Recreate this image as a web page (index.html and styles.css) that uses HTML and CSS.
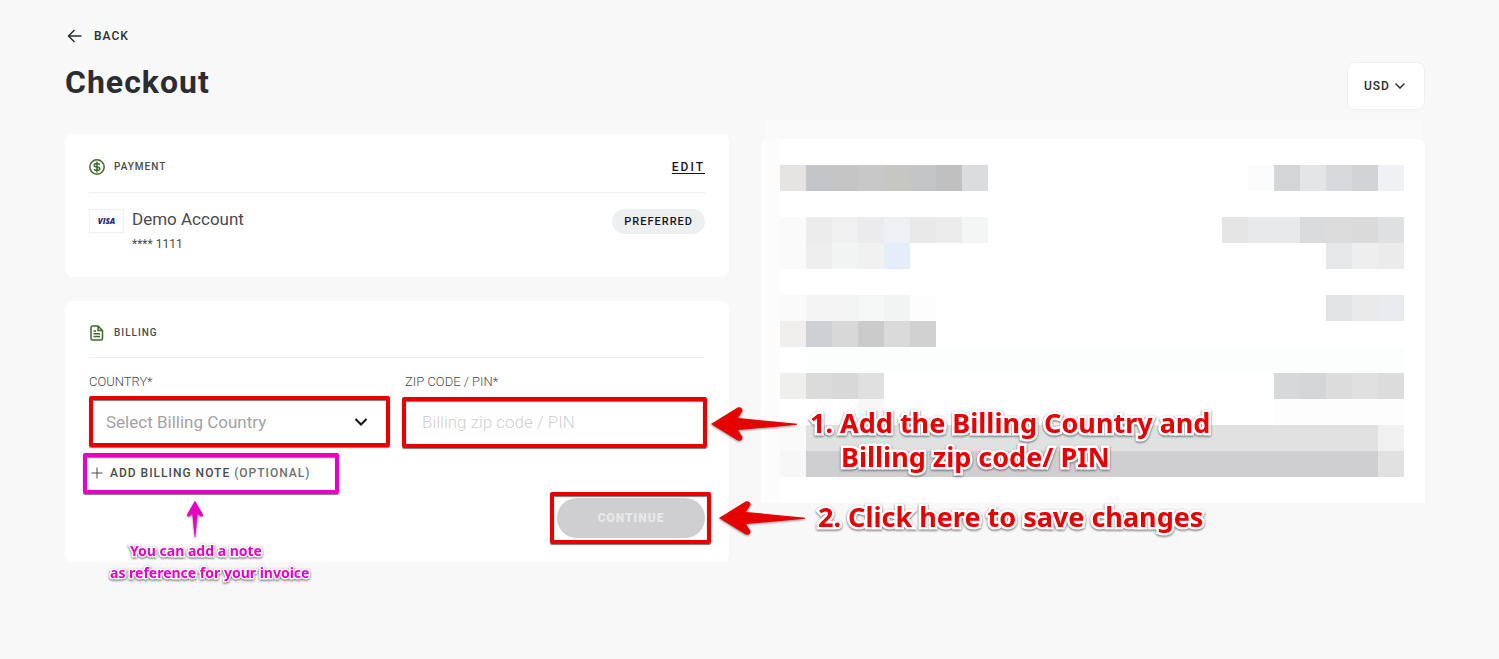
FILE: index.html
```html
<!DOCTYPE html>
<html lang="en">
<head>
    <meta charset="UTF-8">
    <meta name="viewport" content="width=device-width, initial-scale=1.0">
    <title>Checkout</title>
    <link rel="stylesheet" href="styles.css">
</head>
<body>
    <div class="page">
        <header>
            <a class="back" href="#">
                <svg width="20" height="20" viewBox="0 0 20 20"><path d="M16.5 10H3.5M9.5 4L3.5 10L9.5 16"/></svg>
                BACK
            </a>
            <div class="title-row">
                <h1>Checkout</h1>
                <div class="currency">
                    <select aria-label="Currency">
                        <option>USD</option>
                    </select>
                    <svg class="chevron" width="10" height="8" viewBox="0 0 10 8"><path d="M0.5 1.5L5 6L9.5 1.5"/></svg>
                </div>
            </div>
        </header>
        <main>
            <div class="steps">
                <section class="card">
                    <div class="card-head">
                        <svg class="head-icon" width="16" height="18" viewBox="0 0 16 18">
                            <circle cx="8" cy="9" r="7.2"/>
                            <path d="M8 3.5V14.5M10.8 6.8C10.3 5.8 9.2 5.5 8 5.5C6.5 5.5 5.2 6 5.2 7.2C5.2 8.6 6.5 8.8 8 9C9.5 9.2 10.8 9.5 10.8 10.8C10.8 12 9.5 12.5 8 12.5C6.8 12.5 5.6 12.2 5.1 11.2"/>
                        </svg>
                        <h2>PAYMENT</h2>
                        <a class="edit" href="#">EDIT</a>
                    </div>
                    <div class="account">
                        <span class="visa">VISA</span>
                        <div class="account-info">
                            <p class="account-name">Demo Account</p>
                            <p class="account-number">**** 1111</p>
                        </div>
                        <span class="pill">PREFERRED</span>
                    </div>
                </section>
                <section class="card">
                    <div class="card-head">
                        <svg class="head-icon" width="16" height="16" viewBox="0 0 16 16">
                            <path d="M9 1H3.5Q2 1 2 2.5V13.5Q2 15 3.5 15H12Q13.5 15 13.5 13.5V5.5ZM9 1V5.5H13.5"/>
                            <path d="M4.5 6H7M4.5 8.8H11M4.5 11.6H11"/>
                        </svg>
                        <h2>BILLING</h2>
                    </div>
                    <form>
                        <div class="fields">
                            <div>
                                <label for="country">COUNTRY*</label>
                                <div class="field">
                                    <select id="country">
                                        <option>Select Billing Country</option>
                                    </select>
                                    <svg class="chevron dark" width="14" height="8" viewBox="0 0 14 8"><path d="M1.5 1L7 6.5L12.5 1"/></svg>
                                    <span class="mark"></span>
                                </div>
                            </div>
                            <div>
                                <label for="zip">ZIP CODE / PIN*</label>
                                <div class="field">
                                    <input type="text" id="zip" placeholder="Billing zip code / PIN">
                                    <span class="mark mark-wide"></span>
                                    <div class="note note-fields">
                                        <svg class="arrow" width="88" height="36" viewBox="0 0 264 108">
                                            <path d="M3 54L82 5C92 0 102 10 95 19L84 36L261 53V56L84 72L95 89C102 98 92 108 82 103Z"/>
                                        </svg>
                                        <p>1. Add the Billing Country and<br><span class="indent">Billing zip code/ PIN</span></p>
                                    </div>
                                </div>
                            </div>
                        </div>
                        <div class="add-note">
                            <button type="button">
                                <svg width="12" height="12" viewBox="0 0 12 12"><path d="M6 0.5V11.5M0.5 6H11.5"/></svg>
                                <span>ADD BILLING NOTE <span class="optional">(OPTIONAL)</span></span>
                            </button>
                            <span class="mark mark-pink"></span>
                            <div class="note note-optional">
                                <svg class="arrow" width="18" height="38" viewBox="0 0 54 114">
                                    <path d="M27 2L50 42C53 48 47 52 43 48L35 42L28 112H26L19 42L11 48C7 52 1 48 4 42Z"/>
                                </svg>
                                <p><span class="indent">You can add a note</span><br>as reference for your invoice</p>
                            </div>
                        </div>
                        <div class="actions">
                            <div class="submit">
                                <button type="submit" disabled>CONTINUE</button>
                                <span class="mark mark-button"></span>
                                <div class="note note-submit">
                                    <svg class="arrow" width="88" height="36" viewBox="0 0 264 108">
                                        <path d="M3 54L82 5C92 0 102 10 95 19L84 36L261 53V56L84 72L95 89C102 98 92 108 82 103Z"/>
                                    </svg>
                                    <p>2. Click here to save changes</p>
                                </div>
                            </div>
                        </div>
                    </form>
                </section>
            </div>
            <aside>
                <div class="summary-top"></div>
                <div class="summary">
                    <!-- order details are hidden behind a mosaic, one unit per tile -->
                    <svg class="mosaic" viewBox="0 0 24 12" preserveAspectRatio="none" shape-rendering="crispEdges">
                        <g>
                            <rect width="1" height="1" x="0" fill="#e5e4e2"/>
                            <rect width="1" height="1" x="1" fill="#c4c5c8"/>
                            <rect width="1" height="1" x="2" fill="#c5c5c5"/>
                            <rect width="1" height="1" x="3" fill="#c8c8c8"/>
                            <rect width="1" height="1" x="4" fill="#c6c6c3"/>
                            <rect width="1" height="1" x="5" fill="#c4c5c7"/>
                            <rect width="1" height="1" x="6" fill="#c0c0c0"/>
                            <rect width="1" height="1" x="7" fill="#dbdcde"/>
                            <rect width="1" height="1" x="18" fill="#fcfcfc"/>
                            <rect width="1" height="1" x="19" fill="#d4d5d6"/>
                            <rect width="1" height="1" x="20" fill="#e4e5e7"/>
                            <rect width="1" height="1" x="21" fill="#d8d9dd"/>
                            <rect width="1" height="1" x="22" fill="#d2d3d7"/>
                            <rect width="1" height="1" x="23" fill="#f0f1f4"/>
                        </g>
                        <g transform="translate(0 2)">
                            <rect width="1" height="2" x="0" fill="#fafafa"/>
                            <rect width="1" height="1" x="1" fill="#ececec"/>
                            <rect width="1" height="1" x="2" fill="#f0f0f0"/>
                            <rect width="1" height="1" x="3" fill="#ebebed"/>
                            <rect width="1" height="1" x="4" fill="#eff0f3"/>
                            <rect width="1" height="1" x="5" fill="#e9e9e9"/>
                            <rect width="1" height="1" x="6" fill="#ececec"/>
                            <rect width="1" height="1" x="7" fill="#f4f6f5"/>
                            <rect width="1" height="1" x="17" fill="#e5e5e5"/>
                            <rect width="2" height="1" x="18" fill="#e8e9eb"/>
                            <rect width="1" height="1" x="20" fill="#dadbdd"/>
                            <rect width="1" height="1" x="21" fill="#dcdcdc"/>
                            <rect width="1" height="1" x="22" fill="#dadada"/>
                            <rect width="1" height="1" x="23" fill="#dfe0e2"/>
                        </g>
                        <g transform="translate(0 3)">
                            <rect width="1" height="1" x="1" fill="#eeeeee"/>
                            <rect width="1" height="1" x="2" fill="#f2f4f3"/>
                            <rect width="1" height="1" x="3" fill="#f1f1f1"/>
                            <rect width="1" height="1" x="4" fill="#e5ecfa"/>
                            <rect width="1" height="1" x="21" fill="#e6e7e9"/>
                            <rect width="1" height="1" x="22" fill="#eeeeee"/>
                            <rect width="1" height="1" x="23" fill="#ebebeb"/>
                        </g>
                        <g transform="translate(0 5)">
                            <rect width="1" height="1" x="0" fill="#fafafa"/>
                            <rect width="2" height="1" x="1" fill="#f4f4f4"/>
                            <rect width="1" height="1" x="3" fill="#f5f8f7"/>
                            <rect width="1" height="1" x="4" fill="#f1f4f3"/>
                            <rect width="1" height="1" x="5" fill="#fdfdfd"/>
                            <rect width="1" height="1" x="21" fill="#e3e4e6"/>
                            <rect width="1" height="1" x="22" fill="#eaeaea"/>
                            <rect width="1" height="1" x="23" fill="#e9ebee"/>
                        </g>
                        <g transform="translate(0 6)">
                            <rect width="1" height="1" x="0" fill="#f0efed"/>
                            <rect width="1" height="1" x="1" fill="#cfd0d3"/>
                            <rect width="1" height="1" x="2" fill="#d8d8d8"/>
                            <rect width="1" height="1" x="3" fill="#cbcbcb"/>
                            <rect width="1" height="1" x="4" fill="#dadada"/>
                            <rect width="1" height="1" x="5" fill="#d1d1d1"/>
                            <rect width="23" height="1" x="1" y="1" fill="#fcfefd"/>
                        </g>
                        <g transform="translate(0 8)">
                            <rect width="1" height="1" x="0" fill="#efefed"/>
                            <rect width="1" height="1" x="1" fill="#dbdbdc"/>
                            <rect width="1" height="1" x="2" fill="#d8d8d8"/>
                            <rect width="1" height="1" x="3" fill="#e0e0e0"/>
                            <rect width="1" height="1" x="19" fill="#d7d8da"/>
                            <rect width="1" height="1" x="20" fill="#d4d5d7"/>
                            <rect width="1" height="1" x="21" fill="#dcdcdc"/>
                            <rect width="1" height="1" x="22" fill="#e0e0e0"/>
                            <rect width="1" height="1" x="23" fill="#dcdcdc"/>
                            <rect width="1" height="1" x="3" y="1" fill="#f8f7f5"/>
                            <rect width="5" height="1" x="19" y="1" fill="#fdfdfd"/>
                        </g>
                        <g transform="translate(0 10)">
                            <rect width="1" height="1" x="0" fill="#fafafa"/>
                            <rect width="22" height="1" x="1" fill="#e1e1e1"/>
                            <rect width="1" height="1" x="23" fill="#f0f0f0"/>
                            <rect width="1" height="1" x="0" y="1" fill="#f7f7f7"/>
                            <rect width="22" height="1" x="1" y="1" fill="#cfcfd1"/>
                            <rect width="1" height="1" x="23" y="1" fill="#e1e1e1"/>
                        </g>
                    </svg>
                </div>
            </aside>
        </main>
    </div>
</body>
</html>
```
FILE: styles.css
```css
* {
    box-sizing: border-box;
}
body {
    margin: 0;
    min-height: 100vh;
    background-color: #f8f8f8;
    color: #2b2e30;
    font-family: Roboto, Arial, sans-serif;
}
h1, h2, p {
    margin: 0;
}
svg {
    display: block;
    fill: none;
    stroke: currentColor;
    stroke-width: 1.5;
}
button, select, input {
    font-family: inherit;
}
.page {
    padding: 26px 74px 24px 65px;
}
.back {
    display: flex;
    align-items: center;
    gap: 9px;
    width: fit-content;
    height: 20px;
    color: #2b2e30;
    font-size: 12px;
    font-weight: 500;
    letter-spacing: 1px;
    text-decoration: none;
}
.title-row {
    display: flex;
    justify-content: space-between;
    align-items: flex-start;
    margin: 16px 0 10px;
}
h1 {
    font-size: 32px;
    line-height: 40px;
    font-weight: 700;
    letter-spacing: 1px;
}
.currency {
    position: relative;
}
.currency select {
    appearance: none;
    display: block;
    width: 78px;
    height: 48px;
    padding: 0 16px;
    border: 1px solid #efefef;
    border-radius: 8px;
    background-color: #fff;
    color: #2b2e30;
    font-size: 12px;
    font-weight: 500;
    letter-spacing: 1px;
}
.chevron {
    position: absolute;
    top: 20px;
    right: 20px;
    pointer-events: none;
}
.chevron.dark {
    top: 21px;
    right: 21px;
    color: #15151f;
    stroke-width: 2;
}
main {
    display: grid;
    grid-template-columns: 1fr 1fr;
    gap: 32px;
    align-items: start;
}
.steps {
    display: grid;
    gap: 24px;
    padding-top: 14px;
}
.card {
    padding: 24px;
    border-radius: 8px;
    background-color: #fff;
}
.card-head {
    display: flex;
    align-items: center;
    gap: 9px;
    padding-bottom: 16px;
    margin-bottom: 16px;
    border-bottom: 1px solid #efefef;
}
.head-icon {
    color: #3f6a2c;
}
h2 {
    color: #4a4b4d;
    font-size: 10px;
    line-height: 16px;
    font-weight: 500;
    letter-spacing: 1px;
}
.edit {
    margin-left: auto;
    color: #15151f;
    font-size: 12px;
    line-height: 18px;
    font-weight: 500;
    letter-spacing: 2px;
    text-underline-offset: 2px;
}
.account {
    display: flex;
    align-items: flex-start;
}
.visa {
    width: 35px;
    height: 24px;
    margin-right: 8px;
    border: 1px solid #efefef;
    color: #1f2a78;
    font: italic 800 8px/22px "Open Sans", sans-serif;
    text-align: center;
}
.account-info {
    color: #4a4b4d;
}
.account-name {
    font-size: 17px;
    line-height: 20px;
}
.account-number {
    margin-top: 7px;
    font-size: 12px;
    line-height: 17px;
}
.pill {
    margin-left: auto;
    padding: 0 12px;
    border-radius: 13px;
    background-color: #eeeff1;
    color: #15151f;
    font-size: 11px;
    line-height: 25px;
    font-weight: 500;
    letter-spacing: 1px;
}
.fields {
    display: grid;
    grid-template-columns: 1fr 1fr;
    gap: 16px;
}
label {
    display: block;
    margin-bottom: 8px;
    color: #4a4b4d;
    font-size: 13px;
    line-height: 15px;
    font-weight: 300;
}
.field {
    position: relative;
}
.field select, .field input {
    appearance: none;
    display: block;
    width: 100%;
    height: 50px;
    padding: 0 17px;
    border: 0;
    background-color: #fff;
    color: #a2a2a4;
    font-size: 17px;
}
.field input::placeholder {
    color: #cfcfd1;
    font-weight: 300;
}
.add-note {
    position: relative;
    width: fit-content;
    margin-top: 12px;
}
.add-note button {
    display: flex;
    align-items: center;
    gap: 7px;
    height: 28px;
    padding: 0 0 0 2px;
    border: 0;
    background: none;
    color: #4a4b4d;
    font-size: 12px;
    font-weight: 500;
    letter-spacing: 1px;
}
.add-note svg {
    stroke-width: 1;
}
.optional {
    color: #6e6f72;
}
.actions {
    display: flex;
    justify-content: flex-end;
    margin-top: 11px;
}
.submit {
    position: relative;
}
.submit button {
    display: block;
    width: 148px;
    height: 40px;
    border: 0;
    border-radius: 20px;
    background-color: #cfcfd1;
    color: #e8e8e9;
    font-size: 12px;
    font-weight: 900;
    letter-spacing: 1px;
}

/* highlight frames and hand-placed notes */
.mark {
    position: absolute;
    inset: -1px -1px 0 0;
    border: 4px solid #e60000;
    border-radius: 2px;
    box-shadow: 0 1px 1px #777, inset 0 1px 1px #777;
    pointer-events: none;
}
.mark-wide {
    inset: 0 -2px -1px -3px;
}
.mark-button {
    inset: -6px -6px -6px -7px;
}
.mark-pink {
    inset: -6px -28px -7px -6px;
    border-color: #e800c5;
}
.note {
    position: absolute;
    display: flex;
    color: #e60000;
    font-family: "Noto Sans", sans-serif;
    font-weight: 700;
    white-space: nowrap;
    pointer-events: none;
}
.note p {
    -webkit-text-stroke: 5px #fff;
    paint-order: stroke fill;
    filter: drop-shadow(0 1px 1px #666);
}
.arrow {
    flex: none;
    fill: currentColor;
    stroke: none;
    filter: drop-shadow(0 1px 1px #888);
}
.note-fields, .note-submit {
    left: calc(100% + 5px);
    top: 9px;
    gap: 12px;
    font-size: 27px;
    line-height: 34px;
}
.note-submit {
    left: calc(100% + 13px);
    top: 2px;
}
.indent {
    padding-left: 31px;
}
.note-optional {
    top: 41px;
    left: 21px;
    flex-direction: column;
    gap: 2px;
    color: #e800c5;
    font-size: 14px;
    line-height: 22px;
}
.note-optional .arrow {
    margin-left: 76px;
}
.note-optional .indent {
    padding-left: 20px;
}
.note-optional p {
    -webkit-text-stroke-width: 3px;
}

.summary-top {
    height: 19px;
    margin: 0 4px;
    background-color: #fafafa;
}
.summary {
    padding: 26px 21px 26px 19px;
    border-radius: 6px 6px 0 0;
    background: linear-gradient(#fcfcfc, #fcfcfc) 4px 0 / 15px 100% no-repeat #fff;
}
.mosaic {
    width: 100%;
    height: 312px;
    stroke: none;
}
```
